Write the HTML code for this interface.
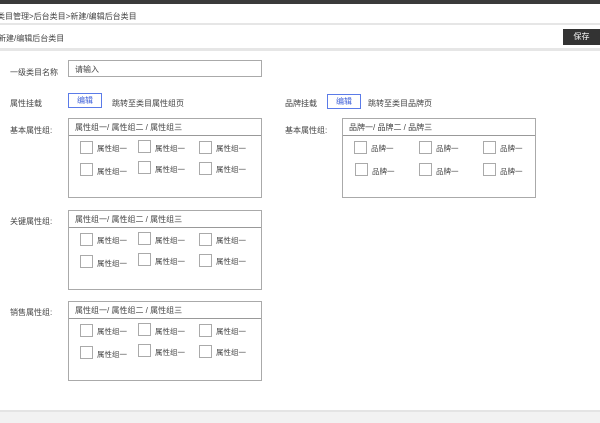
<!DOCTYPE html>
<html><head><meta charset="utf-8"><style>
*{margin:0;padding:0;box-sizing:border-box}
body{width:600px;height:423px;position:relative;background:#fff;font-family:"Liberation Sans","Noto Sans CJK SC",sans-serif;font-size:8px;color:#444;overflow:hidden}
.a{position:absolute;white-space:nowrap}
.box{position:absolute;width:194px;height:80px;border:1px solid #aaa}
.box .h{position:absolute;left:0;right:0;top:0;height:17px;border-bottom:1px solid #999;padding:3px 6px;color:#444}
.cb{position:absolute;width:13px;height:13px;border:1px solid #aaa}
.t{position:absolute;font-size:7.5px;color:#444}
.btn{position:absolute;width:34px;height:15px;border:1px solid #5b7be8;color:#3d5fd8;text-align:center;line-height:13px}
</style></head><body>
<div class="a" style="left:0;top:0;width:600px;height:4px;background:#3a3a3a"></div>
<div class="a" style="left:-3px;top:11px;color:#444">类目管理&gt;后台类目&gt;新建/编辑后台类目</div>
<div class="a" style="left:0;top:23px;width:600px;height:2px;background:#e6e6e6"></div>
<div class="a" style="left:-2px;top:33px">新建/编辑后台类目</div>
<div class="a" style="left:0;top:48px;width:600px;height:3px;background:#e6e6e6"></div>
<div class="a" style="left:563px;top:29px;width:37px;height:16px;background:#333;color:#fff;text-align:center;line-height:16px">保存</div>

<div class="a" style="left:10px;top:67px">一级类目名称</div>
<div class="a" style="left:68px;top:60px;width:194px;height:17px;border:1px solid #aaa;padding:3px 6px">请输入</div>

<div class="a" style="left:10px;top:98px">属性挂载</div>
<div class="btn" style="left:68px;top:93px">编辑</div>
<div class="a" style="left:112px;top:98px">跳转至类目属性组页</div>
<div class="a" style="left:285px;top:98px">品牌挂载</div>
<div class="btn" style="left:327px;top:94px">编辑</div>
<div class="a" style="left:368px;top:98px">跳转至类目品牌页</div>

<div class="a" style="left:10px;top:125px">基本属性组:</div>
<div class="a" style="left:285px;top:125px">基本属性组:</div>
<div class="a" style="left:10px;top:216px">关键属性组:</div>
<div class="a" style="left:10px;top:307px">销售属性组:</div>

<div class="box" style="left:68px;top:118px"><div class="h">属性组一/ 属性组二 / 属性组三</div>
<div class="cb" style="left:11px;top:22px"></div><div class="t" style="left:28px;top:24px">属性组一</div>
<div class="cb" style="left:69px;top:21px"></div><div class="t" style="left:86px;top:24px">属性组一</div>
<div class="cb" style="left:130px;top:22px"></div><div class="t" style="left:147px;top:24px">属性组一</div>
<div class="cb" style="left:11px;top:44px"></div><div class="t" style="left:28px;top:47px">属性组一</div>
<div class="cb" style="left:69px;top:42px"></div><div class="t" style="left:86px;top:45px">属性组一</div>
<div class="cb" style="left:130px;top:43px"></div><div class="t" style="left:147px;top:45px">属性组一</div>
</div>
<div class="box" style="left:342px;top:118px"><div class="h">品牌一/ 品牌二 / 品牌三</div>
<div class="cb" style="left:11px;top:22px"></div><div class="t" style="left:28px;top:24px">品牌一</div>
<div class="cb" style="left:76px;top:22px"></div><div class="t" style="left:93px;top:24px">品牌一</div>
<div class="cb" style="left:140px;top:22px"></div><div class="t" style="left:157px;top:24px">品牌一</div>
<div class="cb" style="left:12px;top:44px"></div><div class="t" style="left:29px;top:47px">品牌一</div>
<div class="cb" style="left:76px;top:44px"></div><div class="t" style="left:93px;top:47px">品牌一</div>
<div class="cb" style="left:140px;top:44px"></div><div class="t" style="left:157px;top:47px">品牌一</div>
</div>
<div class="box" style="left:68px;top:210px"><div class="h">属性组一/ 属性组二 / 属性组三</div>
<div class="cb" style="left:11px;top:22px"></div><div class="t" style="left:28px;top:24px">属性组一</div>
<div class="cb" style="left:69px;top:21px"></div><div class="t" style="left:86px;top:24px">属性组一</div>
<div class="cb" style="left:130px;top:22px"></div><div class="t" style="left:147px;top:24px">属性组一</div>
<div class="cb" style="left:11px;top:44px"></div><div class="t" style="left:28px;top:47px">属性组一</div>
<div class="cb" style="left:69px;top:42px"></div><div class="t" style="left:86px;top:45px">属性组一</div>
<div class="cb" style="left:130px;top:43px"></div><div class="t" style="left:147px;top:45px">属性组一</div>
</div>
<div class="box" style="left:68px;top:301px"><div class="h">属性组一/ 属性组二 / 属性组三</div>
<div class="cb" style="left:11px;top:22px"></div><div class="t" style="left:28px;top:24px">属性组一</div>
<div class="cb" style="left:69px;top:21px"></div><div class="t" style="left:86px;top:24px">属性组一</div>
<div class="cb" style="left:130px;top:22px"></div><div class="t" style="left:147px;top:24px">属性组一</div>
<div class="cb" style="left:11px;top:44px"></div><div class="t" style="left:28px;top:47px">属性组一</div>
<div class="cb" style="left:69px;top:42px"></div><div class="t" style="left:86px;top:45px">属性组一</div>
<div class="cb" style="left:130px;top:43px"></div><div class="t" style="left:147px;top:45px">属性组一</div>
</div>
<div class="a" style="left:0;top:410px;width:600px;height:13px;background:#f2f2f2;border-top:2px solid #e4e4e4"></div>
</body></html>
